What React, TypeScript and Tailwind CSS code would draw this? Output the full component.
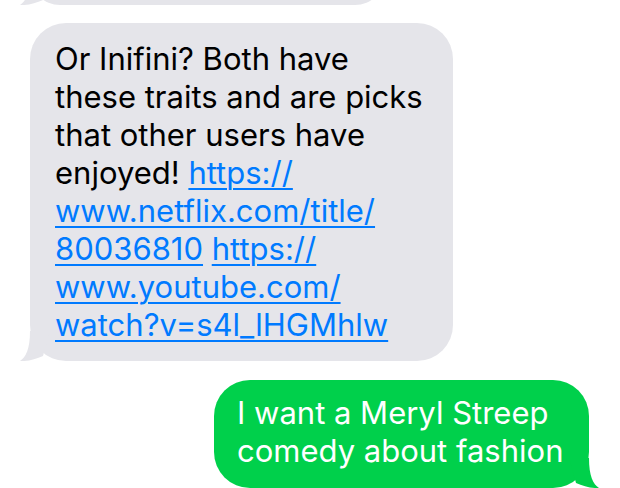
import React from "react";

const FONT = { fontFamily: "Inter, 'Noto Sans', sans-serif" };

function GrayTail() {
  return (
    <svg className="absolute -left-[10px] bottom-0" width="34" height="30" viewBox="0 0 34 30">
      <path d="M10 0 C10 18 6 26 0 30 C8 30.5 16 28 23 25 L30 0 Z" fill="#e5e5ea" />
    </svg>
  );
}

function GreenTail() {
  return (
    <svg className="absolute -right-[10px] bottom-0" width="34" height="30" viewBox="0 0 34 30">
      <path d="M24 0 C24 18 28 26 34 30 C26 30.5 18 28 11 25 L4 0 Z" fill="#00d04b" />
    </svg>
  );
}

function Link({ children }: { children: React.ReactNode }) {
  return <span className="text-[#007aff] underline decoration-[2px] underline-offset-[4px]">{children}</span>;
}

export default function App() {
  return (
    <div className="w-[620px] h-[488px] overflow-hidden bg-white" style={FONT}>
      <div className="flex flex-col">
        {/* previous message, mostly scrolled out */}
        <div className="relative ml-[30px] mt-[-55px] h-[60px] w-[355px] rounded-[36px] bg-[#e5e5ea]">
          <GrayTail />
        </div>

        <div className="relative ml-[30px] mt-[18px] w-[423px] rounded-[36px] bg-[#e5e5ea] pl-[25px] pr-2 py-[17px] text-[31px] leading-[38px] text-black">
          <GrayTail />
          <div className="relative whitespace-nowrap">
            Or Inifini? Both have
            <br />
            these traits and are picks
            <br />
            that other users have
            <br />
            enjoyed! <Link>https://</Link>
            <br />
            <Link>www.netflix.com/title/</Link>
            <br />
            <Link>80036810</Link> <Link>https://</Link>
            <br />
            <Link>www.youtube.com/</Link>
            <br />
            <Link>watch?v=s4l_lHGMhlw</Link>
          </div>
        </div>

        <div className="relative ml-auto mr-[31px] mt-[19px] w-[375px] rounded-[36px] bg-[#00d04b] pl-[23px] pr-2 pt-[14px] pb-[18px] text-[31px] leading-[38px] text-white">
          <GreenTail />
          <div className="relative whitespace-nowrap">
            I want a Meryl Streep
            <br />
            comedy about fashion
          </div>
        </div>
      </div>
    </div>
  );
}
